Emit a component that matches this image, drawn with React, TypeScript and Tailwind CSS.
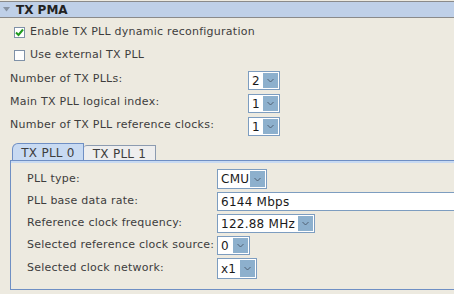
import React from "react";

function Chevron() {
  return (
    <svg width="7" height="5" viewBox="0 0 7 5" className="block">
      <path d="M0.5 1 L3.5 4 L6.5 1" fill="none" stroke="#4a5a6c" strokeWidth="0.9" />
    </svg>
  );
}

function Combo({ value, className }: { value: string; className: string }) {
  return (
    <div className={`flex items-stretch border border-[#7d9dc0] bg-white p-[1px] ${className}`}>
      <span className="flex flex-1 items-center pl-[2px] text-[12px] text-[#1a1a1a]">{value}</span>
      <span className="flex w-[15px] items-center justify-center bg-[#8db0cd]">
        <Chevron />
      </span>
    </div>
  );
}

function Check({ checked }: { checked: boolean }) {
  return (
    <span className="flex h-[11px] w-[11px] items-center justify-center border border-[#7f91a8] bg-white">
      {checked && (
        <svg width="9" height="9" viewBox="0 0 9 9">
          <path d="M1 4.5 L3.5 7 L8 1.5" fill="none" stroke="#1f9a1f" strokeWidth="2" />
        </svg>
      )}
    </span>
  );
}

export default function App() {
  return (
    <div className="h-[294px] w-[454px] overflow-hidden bg-[#edeae0] font-['DejaVu_Sans',sans-serif] text-[11px] tracking-[0.25px] text-[#3d3d3d]">
      <div className="mt-[1px] flex h-[17px] items-center border-y border-[#8a8a8a] bg-[#bfd0e8]">
        <svg width="8" height="5" viewBox="0 0 8 5" className="ml-[3px]">
          <path d="M0 0 L7 0 L3.5 4.5 Z" fill="#8793a3" />
        </svg>
        <span className="ml-[5px] text-[12px] font-bold tracking-normal text-[#222]">TX PMA</span>
      </div>

      <div className="ml-[14px] mt-[8px] flex h-[12px] items-center gap-[5px]">
        <Check checked />
        <span>Enable TX PLL dynamic reconfiguration</span>
      </div>
      <div className="ml-[14px] mt-[11px] flex h-[12px] items-center gap-[5px]">
        <Check checked={false} />
        <span>Use external TX PLL</span>
      </div>

      <div className="ml-[10px] mt-[10px] grid grid-cols-[238px_auto] gap-y-[4px]">
        <span className="leading-[16px]">Number of TX PLLs:</span>
        <Combo value="2" className="h-[19px] w-[32px]" />
        <span className="leading-[16px]">Main TX PLL logical index:</span>
        <Combo value="1" className="h-[19px] w-[32px]" />
        <span className="leading-[16px]">Number of TX PLL reference clocks:</span>
        <Combo value="1" className="h-[19px] w-[32px]" />
      </div>

      <div className="ml-[12px] mt-[7px] flex h-[17px] items-end text-[12px]">
        <div className="flex h-[17px] w-[72px] items-center justify-center rounded-tl-[6px] border-x border-t border-[#6f8fc4] bg-[#c8daf2] pt-[1px]">
          TX PLL 0
        </div>
        <div className="flex h-[15px] w-[72px] items-center justify-center rounded-tl-[3px] border-r border-t border-[#8c9bb0] bg-[#eeeeee] pt-[1px]">
          TX PLL 1
        </div>
      </div>
      <div className="ml-[10px] h-[130px] w-[460px] border border-[#6f8fc4]">
        <div className="h-[2px] bg-[#c8daf2]" />
        <div className="ml-[16px] mt-[6px] grid grid-cols-[190px_auto] items-center gap-y-[3px]">
          <span>PLL type:</span>
          <Combo value="CMU" className="h-[20px] w-[50px]" />
          <span>PLL base data rate:</span>
          <div className="flex h-[19px] w-[250px] items-center border border-[#7d9dc0] bg-white pl-[3px] text-[12px] text-[#1a1a1a]">
            6144 Mbps
          </div>
          <span>Reference clock frequency:</span>
          <Combo value="122.88 MHz" className="h-[19px] w-[98px]" />
          <span>Selected reference clock source:</span>
          <Combo value="0" className="h-[19px] w-[33px]" />
          <span>Selected clock network:</span>
          <Combo value="x1" className="h-[21px] w-[40px]" />
        </div>
      </div>
    </div>
  );
}
